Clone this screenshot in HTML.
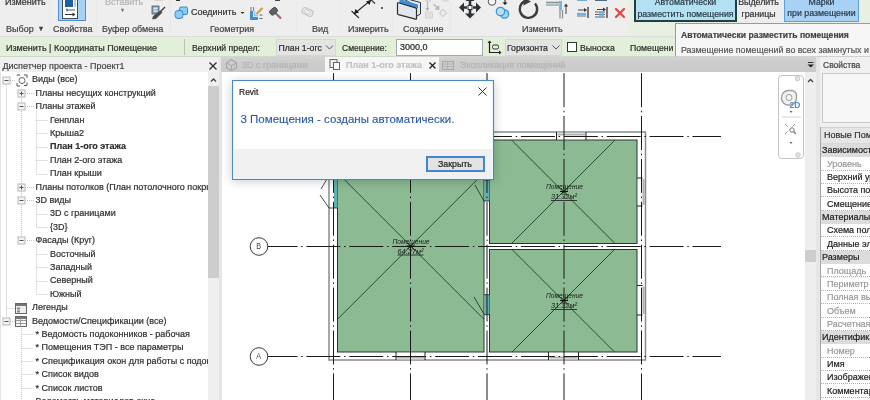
<!DOCTYPE html><html><head><meta charset="utf-8"><style>
html,body{margin:0;padding:0;width:870px;height:400px;overflow:hidden;background:#fff;}
body{position:relative;font-family:"Liberation Sans",sans-serif;filter:blur(0.3px);}
.t{position:absolute;white-space:nowrap;font-family:"Liberation Sans",sans-serif;-webkit-text-stroke:0.2px currentColor;}
svg{position:absolute;left:0;top:0;}
</style></head><body>
<div style="position:absolute;left:0px;top:0px;width:870px;height:36px;background:#eeeeee;"></div>
<div style="position:absolute;left:622px;top:0;width:248px;height:36px;background:linear-gradient(90deg,#eeeeee 0px,#e8f0e2 10px,#e8f0e2 100%)"></div>
<div style="position:absolute;left:737px;top:0px;width:47px;height:23px;background:#ededed;"></div>
<div style="position:absolute;left:0px;top:36px;width:870px;height:1px;background:#dcdcdc;"></div>
<div style="position:absolute;left:49px;top:2px;width:1px;height:32px;background:#e9e9e9;"></div>
<div style="position:absolute;left:96px;top:2px;width:1px;height:32px;background:#e9e9e9;"></div>
<div style="position:absolute;left:170px;top:2px;width:1px;height:32px;background:#e9e9e9;"></div>
<div style="position:absolute;left:296px;top:2px;width:1px;height:32px;background:#e9e9e9;"></div>
<div style="position:absolute;left:340px;top:2px;width:1px;height:32px;background:#e9e9e9;"></div>
<div style="position:absolute;left:392px;top:2px;width:1px;height:32px;background:#e9e9e9;"></div>
<div style="position:absolute;left:450px;top:2px;width:1px;height:32px;background:#e9e9e9;"></div>
<div class="t" style="left:5px;top:-2.02px;font-size:9px;line-height:9px;color:#333;font-weight:normal;">Изменить</div>
<div class="t" style="left:105px;top:-2.02px;font-size:9px;line-height:9px;color:#b4b4b4;font-weight:normal;">Вставить</div>
<div class="t" style="left:121px;top:7.12px;font-size:6px;line-height:6px;color:#777;font-weight:normal;">▾</div>
<div style="position:absolute;left:57.5px;top:-2px;width:28.5px;height:23px;background:#a8d1f4;border:1px solid #4f8fcf;box-sizing:border-box;"></div>
<div style="position:absolute;left:62px;top:-2px;width:16px;height:20.5px;background:#ffffff;border:1px solid #3a4a5a;box-sizing:border-box;"></div>
<div style="position:absolute;left:64.5px;top:-1px;width:8.5px;height:7.5px;background:#1f5f9f;"></div>
<div style="position:absolute;left:74px;top:-1px;width:2px;height:8px;background:#c8c8c8;"></div>
<svg width="90" height="25" style="left:0;top:0"><path d="M66 10H75M67 8.5V11.5" stroke="#555" stroke-width="1"/><path d="M65 14.5H73" stroke="#333" stroke-width="1"/><path d="M72.5 12.5L75.5 14.5L72.5 16.5Z" fill="#333"/></svg>
<div class="t" style="left:6px;top:25.18px;font-size:9px;line-height:9px;color:#424242;font-weight:normal;">Выбор</div>
<div class="t" style="left:38.5px;top:25.16px;font-size:8px;line-height:8px;color:#444;font-weight:normal;">▾</div>
<div class="t" style="left:53px;top:25.18px;font-size:9px;line-height:9px;color:#424242;font-weight:normal;">Свойства</div>
<div class="t" style="left:102px;top:25.18px;font-size:9px;line-height:9px;color:#424242;font-weight:normal;">Буфер обмена</div>
<div class="t" style="left:210px;top:25.18px;font-size:9px;line-height:9px;color:#424242;font-weight:normal;">Геометрия</div>
<div class="t" style="left:312px;top:25.18px;font-size:9px;line-height:9px;color:#424242;font-weight:normal;">Вид</div>
<div class="t" style="left:348px;top:25.18px;font-size:9px;line-height:9px;color:#424242;font-weight:normal;">Измерить</div>
<div class="t" style="left:403px;top:25.18px;font-size:9px;line-height:9px;color:#424242;font-weight:normal;">Создание</div>
<div class="t" style="left:522px;top:25.18px;font-size:9px;line-height:9px;color:#424242;font-weight:normal;">Изменить</div>
<div class="t" style="left:191px;top:8.18px;font-size:9px;line-height:9px;color:#333;font-weight:normal;">Соединить</div>
<svg width="250" height="20" style="left:0;top:0"><path d="M240.5 12H244.5L242.5 14Z" fill="#333"/></svg>
<div style="position:absolute;left:381px;top:7px;width:2px;height:2px;background:#333;border-radius:1px;"></div>
<svg width="870" height="37" viewBox="0 0 870 37" style="left:0;top:0"><rect x="152" y="6" width="7" height="8" fill="#8aa0b8" stroke="#4a5a6a" stroke-width="0.8"/><rect x="153.5" y="7.5" width="4" height="2" fill="#dfe8f0"/><rect x="153.5" y="10.5" width="4" height="1.5" fill="#dfe8f0"/><path d="M165 7L160 12" stroke="#333" stroke-width="1.2"/><path d="M160.5 11L162 12.5L156 18.5L152.5 19L153.5 16Z" fill="#4a4a4a" stroke="#333" stroke-width="0.6"/><rect x="179.5" y="7" width="8" height="7.5" rx="1.5" fill="#8ccbf2" stroke="#3a8ad0" stroke-width="1"/><rect x="175" y="10.5" width="8" height="8" rx="3" fill="#8ccbf2" stroke="#3a8ad0" stroke-width="1"/><path d="M251 7V11M253.5 7V11" stroke="#8a8a8a" stroke-width="1.2"/><path d="M251.5 11V18.5H258" stroke="#3b8fd8" stroke-width="3" fill="none"/><path d="M254.5 11V15.5H258" stroke="#8cc4ee" stroke-width="1.5" fill="none"/><path d="M262.5 8L256.5 14" stroke="#d8a048" stroke-width="2.4"/><path d="M259.5 15H262.5M259.5 18.5H262.5" stroke="#555" stroke-width="0.9"/><path d="M281 18.5L274.5 12" stroke="#9a6a72" stroke-width="2.2"/><rect x="269.5" y="8.5" width="8" height="5.5" rx="2" transform="rotate(-40 273.5 11.2)" fill="#5c6268" stroke="#3a3f44" stroke-width="0.8"/><rect x="302" y="9" width="11" height="6" rx="2" transform="rotate(25 307.5 12)" fill="none" stroke="#c0c0c0" stroke-width="1"/><rect x="304" y="10.5" width="7" height="3" rx="1" transform="rotate(25 307.5 12)" fill="none" stroke="#cfcfcf" stroke-width="0.8"/><path d="M354 14L371 0" stroke="#2a2a2a" stroke-width="1.1"/><path d="M351.5 11L359 18" stroke="#2a2a2a" stroke-width="1.1"/><path d="M368 -3L375 3.5" stroke="#2a2a2a" stroke-width="1.1"/><path d="M354 14L355.5 9L359 12.5Z" fill="#1a1a1a"/><path d="M371 0L366 1.5L369.5 5Z" fill="#1a1a1a"/><path d="M400 -3L420.5 2.5V14L416 16.5V6Z" fill="#dfeaf6" stroke="#333" stroke-width="1" stroke-linejoin="round"/><path d="M399.5 -1L418 4.5V8.5L399.5 3Z" fill="#3d8fd6"/><path d="M397.5 3.5Q397.5 2.5 398.5 2.8L415.5 7.8Q416.5 8.1 416.5 9V18.5Q416.5 19.5 415.5 19.2L398.5 14.7Q397.5 14.4 397.5 13.5Z" fill="#e2e7ee" stroke="#2e2e2e" stroke-width="1.2"/><rect x="425.5" y="-3" width="5" height="4" fill="none" stroke="#cfcfcf"/><path d="M427.5 1V9" stroke="#b8b8b8" stroke-width="1.2"/><path d="M425.5 8H429.5L427.5 11Z" fill="#b0b0b0"/><rect x="425.5" y="12" width="7" height="6" fill="#e2e2e2" stroke="#d2d2d2"/><path d="M433.5 4L438 8.5" stroke="#b8b8b8" stroke-width="1.3"/><path d="M439.5 10L434.5 9.5L439 5Z" fill="#b8b8b8"/><rect x="440.5" y="10.5" width="5" height="5" transform="rotate(45 443 13)" fill="none" stroke="#cfcfcf" stroke-width="1.2"/><rect x="443" y="-3" width="5" height="4" fill="none" stroke="#d0d0d0"/><g fill="#2e3236"><path d="M470 -3.5L474.5 1H465.5Z"/><path d="M470 18.5L475 13.5H465Z"/><path d="M459 7.5L464 2.5V12.5Z"/><path d="M481 7.5L476 2.5V12.5Z"/></g><path d="M470 0V5M470 10V14M463 7.5H467M473 7.5H477" stroke="#2e3236" stroke-width="2.6"/><rect x="468" y="5.5" width="4" height="4" fill="#fff" stroke="#2e3236" stroke-width="1"/><circle cx="492" cy="1.5" r="3.8" fill="#f4f4f4" stroke="#555" stroke-width="1"/><path d="M505 -2V3" stroke="#111" stroke-width="1"/><path d="M502.5 2.5H507.5L505 5Z" fill="#111"/><circle cx="504.5" cy="14" r="4.2" fill="#9fd6f6" stroke="#3d95d8" stroke-width="1.3"/><circle cx="500.5" cy="11.5" r="4.2" fill="#b7e0f8" stroke="#3d95d8" stroke-width="1.3"/><path d="M535 3.5A8.7 8.7 0 1 1 525 1.2" fill="none" stroke="#3a3d40" stroke-width="2.4"/><path d="M523.5 -2.5L531 1.5L523.5 5.5Z" fill="#3a3d40"/><path d="M546 2.5H561M546 5H561" stroke="#8c8c8c" stroke-width="1.6"/><path d="M560.5 1V10" stroke="#6fb8ee" stroke-width="3"/><path d="M560 10V18.5M562.5 10V18.5" stroke="#8c8c8c" stroke-width="1.2"/><path d="M566 5V14" stroke="#333" stroke-width="0.9"/><path d="M564 6.5L566 3.5L568 6.5Z" fill="#333"/><rect x="546" y="3" width="14" height="3" fill="#a8d4f2" opacity="0.5"/><path d="M588 7V18" stroke="#333" stroke-width="1.3"/><path d="M578 10H585" stroke="#333" stroke-width="0.9"/><path d="M584 8L587 10L584 12Z" fill="#333"/><path d="M577 14H586" stroke="#6fb0e8" stroke-width="2.2"/><path d="M577 16H586" stroke="#555" stroke-width="0.8"/><path d="M607 7V18" stroke="#333" stroke-width="1.3"/><path d="M597 9.5H604" stroke="#333" stroke-width="0.9"/><path d="M603 7.5L606 9.5L603 11.5Z" fill="#333"/><path d="M595 12H605M595 14.5H605M595 17H605" stroke="#555" stroke-width="0.9"/><rect x="599" y="11.5" width="5" height="6" fill="#6fb0e8" opacity="0.8"/><path d="M616 9L624 17M624 9L616 17" stroke="#e24a4a" stroke-width="2.3" stroke-linecap="round"/><rect x="577" y="-2" width="10" height="3" fill="#6fb0e8"/><rect x="595" y="-2" width="12" height="3" fill="#4a6a8a"/><rect x="176" y="-2" width="4" height="3" fill="#333"/><rect x="275" y="-2" width="5" height="3" fill="#444"/><rect x="154" y="-2" width="9" height="2.5" fill="#bbb"/></svg>
<div style="position:absolute;left:634px;top:-2px;width:103px;height:23.5px;background:#b3e1f4;border:2px solid #1f3f44;box-sizing:border-box;"></div>
<div class="t" style="left:634px;top:-3px;width:103px;text-align:center;font-size:8.8px;line-height:11.6px;color:#2a3a44">Автоматически<br>разместить помещения</div>
<div class="t" style="left:737px;top:-3px;width:43px;text-align:center;font-size:8.8px;line-height:11.6px;color:#333">Выделить<br>границы</div>
<div style="position:absolute;left:784px;top:-2px;width:75px;height:23.5px;background:#a9d1f3;border:1px solid #5f9fd8;box-sizing:border-box;"></div>
<div class="t" style="left:784px;top:-3.5px;width:75px;text-align:center;font-size:8.8px;line-height:11.6px;color:#2a3a4a">Марки<br>при размещении</div>
<div style="position:absolute;left:0px;top:37px;width:870px;height:20px;background:#e2efd9;"></div>
<div style="position:absolute;left:0px;top:56px;width:870px;height:1px;background:#d0d8cc;"></div>
<div class="t" style="left:6px;top:43.68px;font-size:9px;line-height:9px;color:#2b2b2b;font-weight:normal;">Изменить | Координаты Помещение</div>
<div style="position:absolute;left:184px;top:39px;width:1px;height:16px;background:#b8c4b0;"></div>
<div class="t" style="left:192px;top:43.82px;font-size:8.7px;line-height:8.7px;color:#2b2b2b;font-weight:normal;">Верхний предел:</div>
<div style="position:absolute;left:275.5px;top:39px;width:60.5px;height:17px;background:#e4e4e4;border:1px solid #d6d6d6;box-sizing:border-box;"></div>
<div class="t" style="left:278.5px;top:43.82px;font-size:8.7px;line-height:8.7px;color:#2b2b2b;font-weight:normal;">План 1-огс</div>
<div class="t" style="left:342px;top:43.92px;font-size:8.5px;line-height:8.5px;color:#2b2b2b;font-weight:normal;">Смещение:</div>
<div style="position:absolute;left:395.5px;top:38.5px;width:87.5px;height:17.0px;background:#ffffff;border:1px solid #a8a8a8;box-sizing:border-box;"></div>
<div class="t" style="left:400px;top:43.18px;font-size:9px;line-height:9px;color:#222;font-weight:normal;">3000,0</div>
<div style="position:absolute;left:504.5px;top:39px;width:57.5px;height:17px;background:#e4e4e4;border:1px solid #d6d6d6;box-sizing:border-box;"></div>
<div class="t" style="left:507px;top:43.82px;font-size:8.7px;line-height:8.7px;color:#2b2b2b;font-weight:normal;">Горизонта</div>
<div style="position:absolute;left:567px;top:42px;width:10px;height:10px;background:#ffffff;border:1px solid #333;box-sizing:border-box;"></div>
<div class="t" style="left:580px;top:43.82px;font-size:8.7px;line-height:8.7px;color:#2b2b2b;font-weight:normal;">Выноска</div>
<div class="t" style="left:630px;top:43.82px;font-size:8.7px;line-height:8.7px;color:#2b2b2b;font-weight:normal;">Помещени</div>
<div style="position:absolute;left:675px;top:23px;width:197px;height:34px;background:#f6f6f7;border:1px solid #9a9a9a;border-bottom-color:#d0d0d0;box-sizing:border-box;"></div>
<div class="t" style="left:681px;top:30.87px;font-size:8.6px;line-height:8.6px;color:#444;font-weight:bold;">Автоматически разместить помещения</div>
<div class="t" style="left:681px;top:45.75px;font-size:8.85px;line-height:8.85px;color:#555;font-weight:normal;">Размещение помещений во всех замкнутых и</div>
<div style="position:absolute;left:0px;top:57px;width:222px;height:343px;background:#f0f0f0;"></div>
<div style="position:absolute;left:0px;top:72px;width:208px;height:328px;background:#ffffff;"></div>
<div style="position:absolute;left:0px;top:72px;width:1px;height:328px;background:#e4e4e4;"></div>
<div class="t" style="left:2.5px;top:61.68px;font-size:9px;line-height:9px;color:#444;font-weight:normal;">Диспетчер проекта - Проект1</div>
<div style="position:absolute;left:208px;top:72px;width:11px;height:328px;background:#efefef;"></div>
<div style="position:absolute;left:208px;top:85.5px;width:11px;height:192.5px;background:#cdcdcd;"></div>
<div style="position:absolute;left:219px;top:57px;width:3px;height:343px;background:#e6e6e6;"></div>
<div style="position:absolute;left:221px;top:57px;width:597px;height:15px;background:#cbcbcb;background:linear-gradient(180deg,#d3d3d3 0px,#cdcdcd 5px,#cacaca 15px);"></div>
<div style="position:absolute;left:325px;top:57px;width:113.5px;height:15px;background:#f6f6f6;"></div>
<div class="t" style="left:242px;top:61.18px;font-size:9px;line-height:9px;color:#b3b3b3;font-weight:normal;">3D с границами</div>
<div class="t" style="left:346px;top:61.18px;font-size:9px;line-height:9px;color:#c2c2c2;font-weight:bold;">План 1-ого этажа</div>
<div class="t" style="left:460px;top:61.18px;font-size:9px;line-height:9px;color:#b3b3b3;font-weight:normal;">Экспликация помещений</div>
<div style="position:absolute;left:222px;top:72px;width:594px;height:328px;background:#ffffff;"></div>
<div style="position:absolute;left:805px;top:72px;width:11px;height:328px;background:#eeeeee;"></div>
<div style="position:absolute;left:805px;top:250px;width:11px;height:12px;background:#cdcdcd;"></div>
<div style="position:absolute;left:816px;top:57px;width:4px;height:343px;background:#e6e6e6;"></div>
<div style="position:absolute;left:778px;top:74.5px;width:26px;height:84.5px;background:#ffffff;border:1px solid #c4c4c4;border-radius:4px;box-sizing:border-box;"></div>
<div style="position:absolute;left:820px;top:57px;width:50px;height:343px;background:#f0f0f0;"></div>
<div class="t" style="left:823px;top:60.92px;font-size:8.5px;line-height:8.5px;color:#444;font-weight:normal;">Свойства</div>
<div style="position:absolute;left:822px;top:73px;width:50px;height:50px;background:#f7f7f7;border:1px solid #c8c8c8;box-sizing:border-box;"></div>
<div style="position:absolute;left:820px;top:127px;width:50px;height:16.5px;background:#e6e6e6;border-top:1px solid #d0d0d0;border-bottom:1px solid #d8d8d8;box-sizing:border-box;"></div>
<div class="t" style="left:824px;top:130.68px;font-size:9px;line-height:9px;color:#333;font-weight:normal;">Новые Помещения</div>
<div style="position:absolute;left:820px;top:144px;width:50px;height:13.349999999999994px;background:#dcdcdc;"></div>
<div class="t" style="left:822px;top:146.36px;font-size:9px;line-height:9px;color:#222;font-weight:normal;">Зависимости</div>
<div style="position:absolute;left:820px;top:157.35px;width:50px;height:13.349999999999994px;background:#ffffff;border-bottom:1px dotted #b0b0b0;box-sizing:border-box;"></div>
<div class="t" style="left:827px;top:159.71px;font-size:9px;line-height:9px;color:#999;font-weight:normal;">Уровень</div>
<div style="position:absolute;left:820px;top:170.7px;width:50px;height:13.349999999999994px;background:#ffffff;border-bottom:1px dotted #b0b0b0;box-sizing:border-box;"></div>
<div class="t" style="left:827px;top:173.06px;font-size:9px;line-height:9px;color:#222;font-weight:normal;">Верхний уровень</div>
<div style="position:absolute;left:820px;top:184.04999999999998px;width:50px;height:13.349999999999994px;background:#ffffff;border-bottom:1px dotted #b0b0b0;box-sizing:border-box;"></div>
<div class="t" style="left:827px;top:186.41px;font-size:9px;line-height:9px;color:#222;font-weight:normal;">Высота помещения</div>
<div style="position:absolute;left:820px;top:197.39999999999998px;width:50px;height:13.349999999999994px;background:#ffffff;border-bottom:1px dotted #b0b0b0;box-sizing:border-box;"></div>
<div class="t" style="left:827px;top:199.75px;font-size:9px;line-height:9px;color:#222;font-weight:normal;">Смещение</div>
<div style="position:absolute;left:820px;top:210.74999999999997px;width:50px;height:13.349999999999994px;background:#dcdcdc;"></div>
<div class="t" style="left:822px;top:213.10px;font-size:9px;line-height:9px;color:#222;font-weight:normal;">Материалы</div>
<div style="position:absolute;left:820px;top:224.09999999999997px;width:50px;height:13.349999999999994px;background:#ffffff;border-bottom:1px dotted #b0b0b0;box-sizing:border-box;"></div>
<div class="t" style="left:827px;top:226.45px;font-size:9px;line-height:9px;color:#222;font-weight:normal;">Схема пола</div>
<div style="position:absolute;left:820px;top:237.44999999999996px;width:50px;height:13.349999999999994px;background:#ffffff;border-bottom:1px dotted #b0b0b0;box-sizing:border-box;"></div>
<div class="t" style="left:827px;top:239.80px;font-size:9px;line-height:9px;color:#222;font-weight:normal;">Данные элемента</div>
<div style="position:absolute;left:820px;top:250.79999999999995px;width:50px;height:13.350000000000023px;background:#dcdcdc;"></div>
<div class="t" style="left:822px;top:253.15px;font-size:9px;line-height:9px;color:#222;font-weight:normal;">Размеры</div>
<div style="position:absolute;left:820px;top:264.15px;width:50px;height:13.350000000000023px;background:#ffffff;border-bottom:1px dotted #b0b0b0;box-sizing:border-box;"></div>
<div class="t" style="left:827px;top:266.50px;font-size:9px;line-height:9px;color:#999;font-weight:normal;">Площадь</div>
<div style="position:absolute;left:820px;top:277.5px;width:50px;height:13.350000000000023px;background:#ffffff;border-bottom:1px dotted #b0b0b0;box-sizing:border-box;"></div>
<div class="t" style="left:827px;top:279.86px;font-size:9px;line-height:9px;color:#999;font-weight:normal;">Периметр</div>
<div style="position:absolute;left:820px;top:290.85px;width:50px;height:13.350000000000023px;background:#ffffff;border-bottom:1px dotted #b0b0b0;box-sizing:border-box;"></div>
<div class="t" style="left:827px;top:293.21px;font-size:9px;line-height:9px;color:#999;font-weight:normal;">Полная высота</div>
<div style="position:absolute;left:820px;top:304.20000000000005px;width:50px;height:13.350000000000023px;background:#ffffff;border-bottom:1px dotted #b0b0b0;box-sizing:border-box;"></div>
<div class="t" style="left:827px;top:306.56px;font-size:9px;line-height:9px;color:#999;font-weight:normal;">Объем</div>
<div style="position:absolute;left:820px;top:317.55000000000007px;width:50px;height:13.350000000000023px;background:#ffffff;border-bottom:1px dotted #b0b0b0;box-sizing:border-box;"></div>
<div class="t" style="left:827px;top:319.91px;font-size:9px;line-height:9px;color:#999;font-weight:normal;">Расчетная</div>
<div style="position:absolute;left:820px;top:330.9000000000001px;width:50px;height:13.350000000000023px;background:#dcdcdc;"></div>
<div class="t" style="left:822px;top:333.26px;font-size:9px;line-height:9px;color:#222;font-weight:normal;">Идентификация</div>
<div style="position:absolute;left:820px;top:344.2500000000001px;width:50px;height:13.350000000000023px;background:#ffffff;border-bottom:1px dotted #b0b0b0;box-sizing:border-box;"></div>
<div class="t" style="left:827px;top:346.61px;font-size:9px;line-height:9px;color:#999;font-weight:normal;">Номер</div>
<div style="position:absolute;left:820px;top:357.60000000000014px;width:50px;height:13.350000000000023px;background:#ffffff;border-bottom:1px dotted #b0b0b0;box-sizing:border-box;"></div>
<div class="t" style="left:827px;top:359.96px;font-size:9px;line-height:9px;color:#222;font-weight:normal;">Имя</div>
<div style="position:absolute;left:820px;top:370.95000000000016px;width:50px;height:13.350000000000023px;background:#ffffff;border-bottom:1px dotted #b0b0b0;box-sizing:border-box;"></div>
<div class="t" style="left:827px;top:373.31px;font-size:9px;line-height:9px;color:#222;font-weight:normal;">Изображение</div>
<div style="position:absolute;left:820px;top:384.3000000000002px;width:50px;height:13.350000000000023px;background:#ffffff;border-bottom:1px dotted #b0b0b0;box-sizing:border-box;"></div>
<div class="t" style="left:827px;top:386.66px;font-size:9px;line-height:9px;color:#222;font-weight:normal;">Комментарий</div>
<div style="position:absolute;left:820px;top:397.6500000000002px;width:50px;height:13.350000000000023px;background:#ffffff;border-bottom:1px dotted #b0b0b0;box-sizing:border-box;"></div>
<div class="t" style="left:827px;top:400.01px;font-size:9px;line-height:9px;color:#222;font-weight:normal;">x</div>
<div style="position:absolute;left:820px;top:127px;width:1px;height:273px;background:#a8a8a8;"></div>
<div style="position:absolute;left:0;top:72px;width:208px;height:328px;overflow:hidden;">
<svg width="208" height="328" viewBox="0 72 208 328" style="left:0;top:0"><line x1="6.5" y1="83.7" x2="6.5" y2="320.90000000000003" stroke="#c4c4c4" stroke-width="1" stroke-dasharray="1 1"/><line x1="21.5" y1="97.10000000000001" x2="21.5" y2="240.5" stroke="#c4c4c4" stroke-width="1" stroke-dasharray="1 1"/><line x1="36.5" y1="110.5" x2="36.5" y2="173.5" stroke="#c4c4c4" stroke-width="1" stroke-dasharray="1 1"/><line x1="36.5" y1="204.3" x2="36.5" y2="227.10000000000002" stroke="#c4c4c4" stroke-width="1" stroke-dasharray="1 1"/><line x1="36.5" y1="244.5" x2="36.5" y2="294.1" stroke="#c4c4c4" stroke-width="1" stroke-dasharray="1 1"/><line x1="21.5" y1="325.90000000000003" x2="21.5" y2="400" stroke="#c4c4c4" stroke-width="1" stroke-dasharray="1 1"/><line x1="10" y1="80.5" x2="16" y2="80.5" stroke="#c4c4c4" stroke-width="1" stroke-dasharray="1 1"/><rect x="3.0" y="77.0" width="7" height="7" fill="#f4f4f4" stroke="#b8b8b8"/><line x1="4.5" y1="80.5" x2="8.5" y2="80.5" stroke="#555"/><path d="M17 75.5v-0.5h3M24 75.0h3v3M27 82.5v3h-3M20 86.0h-3v-3" stroke="#555" fill="none"/><circle cx="22" cy="80.5" r="3" stroke="#666" fill="none"/><line x1="25" y1="93.5" x2="34" y2="93.5" stroke="#c4c4c4" stroke-width="1" stroke-dasharray="1 1"/><rect x="18.0" y="90.0" width="7" height="7" fill="#f4f4f4" stroke="#b8b8b8"/><line x1="19.5" y1="93.5" x2="23.5" y2="93.5" stroke="#555"/><line x1="21.5" y1="91.5" x2="21.5" y2="95.5" stroke="#555"/><line x1="25" y1="106.5" x2="34" y2="106.5" stroke="#c4c4c4" stroke-width="1" stroke-dasharray="1 1"/><rect x="18.0" y="103.0" width="7" height="7" fill="#f4f4f4" stroke="#b8b8b8"/><line x1="19.5" y1="106.5" x2="23.5" y2="106.5" stroke="#555"/><line x1="36.5" y1="120.5" x2="48" y2="120.5" stroke="#c4c4c4" stroke-width="1" stroke-dasharray="1 1"/><line x1="36.5" y1="133.5" x2="48" y2="133.5" stroke="#c4c4c4" stroke-width="1" stroke-dasharray="1 1"/><line x1="36.5" y1="147.5" x2="48" y2="147.5" stroke="#c4c4c4" stroke-width="1" stroke-dasharray="1 1"/><line x1="36.5" y1="160.5" x2="48" y2="160.5" stroke="#c4c4c4" stroke-width="1" stroke-dasharray="1 1"/><line x1="36.5" y1="174.5" x2="48" y2="174.5" stroke="#c4c4c4" stroke-width="1" stroke-dasharray="1 1"/><line x1="25" y1="187.5" x2="34" y2="187.5" stroke="#c4c4c4" stroke-width="1" stroke-dasharray="1 1"/><rect x="18.0" y="184.0" width="7" height="7" fill="#f4f4f4" stroke="#b8b8b8"/><line x1="19.5" y1="187.5" x2="23.5" y2="187.5" stroke="#555"/><line x1="21.5" y1="185.5" x2="21.5" y2="189.5" stroke="#555"/><line x1="25" y1="200.5" x2="34" y2="200.5" stroke="#c4c4c4" stroke-width="1" stroke-dasharray="1 1"/><rect x="18.0" y="197.0" width="7" height="7" fill="#f4f4f4" stroke="#b8b8b8"/><line x1="19.5" y1="200.5" x2="23.5" y2="200.5" stroke="#555"/><line x1="36.5" y1="214.5" x2="48" y2="214.5" stroke="#c4c4c4" stroke-width="1" stroke-dasharray="1 1"/><line x1="36.5" y1="227.5" x2="48" y2="227.5" stroke="#c4c4c4" stroke-width="1" stroke-dasharray="1 1"/><line x1="25" y1="240.5" x2="34" y2="240.5" stroke="#c4c4c4" stroke-width="1" stroke-dasharray="1 1"/><rect x="18.0" y="237.0" width="7" height="7" fill="#f4f4f4" stroke="#b8b8b8"/><line x1="19.5" y1="240.5" x2="23.5" y2="240.5" stroke="#555"/><line x1="36.5" y1="254.5" x2="48" y2="254.5" stroke="#c4c4c4" stroke-width="1" stroke-dasharray="1 1"/><line x1="36.5" y1="267.5" x2="48" y2="267.5" stroke="#c4c4c4" stroke-width="1" stroke-dasharray="1 1"/><line x1="36.5" y1="281.5" x2="48" y2="281.5" stroke="#c4c4c4" stroke-width="1" stroke-dasharray="1 1"/><line x1="36.5" y1="294.5" x2="48" y2="294.5" stroke="#c4c4c4" stroke-width="1" stroke-dasharray="1 1"/><line x1="6.5" y1="308.5" x2="15" y2="308.5" stroke="#c4c4c4" stroke-width="1" stroke-dasharray="1 1"/><rect x="15.5" y="303.5" width="11" height="10" fill="#eee" stroke="#666"/><rect x="16" y="304.0" width="10" height="2" fill="#777"/><rect x="17" y="307.5" width="3" height="2" fill="#888"/><rect x="17" y="310.5" width="3" height="2" fill="#888"/><line x1="10" y1="321.5" x2="16" y2="321.5" stroke="#c4c4c4" stroke-width="1" stroke-dasharray="1 1"/><rect x="3.0" y="318.0" width="7" height="7" fill="#f4f4f4" stroke="#b8b8b8"/><line x1="4.5" y1="321.5" x2="8.5" y2="321.5" stroke="#555"/><rect x="15.5" y="316.5" width="11" height="10" fill="#f4f4f4" stroke="#666"/><rect x="16" y="317.0" width="10" height="2" fill="#777"/><line x1="16" y1="320.5" x2="26" y2="320.5" stroke="#999"/><line x1="16" y1="323.5" x2="26" y2="323.5" stroke="#999"/><line x1="20.5" y1="318.5" x2="20.5" y2="326.5" stroke="#999"/><line x1="21.5" y1="334.5" x2="33" y2="334.5" stroke="#c4c4c4" stroke-width="1" stroke-dasharray="1 1"/><line x1="21.5" y1="348.5" x2="33" y2="348.5" stroke="#c4c4c4" stroke-width="1" stroke-dasharray="1 1"/><line x1="21.5" y1="361.5" x2="33" y2="361.5" stroke="#c4c4c4" stroke-width="1" stroke-dasharray="1 1"/><line x1="21.5" y1="374.5" x2="33" y2="374.5" stroke="#c4c4c4" stroke-width="1" stroke-dasharray="1 1"/><line x1="21.5" y1="388.5" x2="33" y2="388.5" stroke="#c4c4c4" stroke-width="1" stroke-dasharray="1 1"/><line x1="21.5" y1="401.5" x2="33" y2="401.5" stroke="#c4c4c4" stroke-width="1" stroke-dasharray="1 1"/></svg>
<div class="t" style="left:32px;top:3.38px;font-size:9px;line-height:9px;color:#2e2e2e;font-weight:normal">Виды (все)</div>
<div class="t" style="left:35.5px;top:16.78px;font-size:9px;line-height:9px;color:#2e2e2e;font-weight:normal">Планы несущих конструкций</div>
<div class="t" style="left:35.5px;top:30.18px;font-size:9px;line-height:9px;color:#2e2e2e;font-weight:normal">Планы этажей</div>
<div class="t" style="left:50px;top:43.58px;font-size:9px;line-height:9px;color:#2e2e2e;font-weight:normal">Генплан</div>
<div class="t" style="left:50px;top:56.98px;font-size:9px;line-height:9px;color:#2e2e2e;font-weight:normal">Крыша2</div>
<div class="t" style="left:50px;top:70.38px;font-size:9px;line-height:9px;color:#2e2e2e;font-weight:bold">План 1-ого этажа</div>
<div class="t" style="left:50px;top:83.78px;font-size:9px;line-height:9px;color:#2e2e2e;font-weight:normal">План 2-ого этажа</div>
<div class="t" style="left:50px;top:97.18px;font-size:9px;line-height:9px;color:#2e2e2e;font-weight:normal">План крыши</div>
<div class="t" style="left:35.5px;top:110.58px;font-size:9px;line-height:9px;color:#2e2e2e;font-weight:normal">Планы потолков (План потолочного покрытия)</div>
<div class="t" style="left:35.5px;top:123.98px;font-size:9px;line-height:9px;color:#2e2e2e;font-weight:normal">3D виды</div>
<div class="t" style="left:50px;top:137.38px;font-size:9px;line-height:9px;color:#2e2e2e;font-weight:normal">3D с границами</div>
<div class="t" style="left:50px;top:150.78px;font-size:9px;line-height:9px;color:#2e2e2e;font-weight:normal">{3D}</div>
<div class="t" style="left:35.5px;top:164.18px;font-size:9px;line-height:9px;color:#2e2e2e;font-weight:normal">Фасады (Круг)</div>
<div class="t" style="left:50px;top:177.58px;font-size:9px;line-height:9px;color:#2e2e2e;font-weight:normal">Восточный</div>
<div class="t" style="left:50px;top:190.98px;font-size:9px;line-height:9px;color:#2e2e2e;font-weight:normal">Западный</div>
<div class="t" style="left:50px;top:204.38px;font-size:9px;line-height:9px;color:#2e2e2e;font-weight:normal">Северный</div>
<div class="t" style="left:50px;top:217.78px;font-size:9px;line-height:9px;color:#2e2e2e;font-weight:normal">Южный</div>
<div class="t" style="left:32px;top:231.18px;font-size:9px;line-height:9px;color:#2e2e2e;font-weight:normal">Легенды</div>
<div class="t" style="left:32px;top:244.58px;font-size:9px;line-height:9px;color:#2e2e2e;font-weight:normal">Ведомости/Спецификации (все)</div>
<div class="t" style="left:35.5px;top:257.98px;font-size:9px;line-height:9px;color:#2e2e2e;font-weight:normal">* Ведомость подоконников - рабочая</div>
<div class="t" style="left:35.5px;top:271.38px;font-size:9px;line-height:9px;color:#2e2e2e;font-weight:normal">* Помещения ТЭП - все параметры</div>
<div class="t" style="left:35.5px;top:284.78px;font-size:9px;line-height:9px;color:#2e2e2e;font-weight:normal">* Спецификация окон для работы с подоконниками</div>
<div class="t" style="left:35.5px;top:298.18px;font-size:9px;line-height:9px;color:#2e2e2e;font-weight:normal">* Список видов</div>
<div class="t" style="left:35.5px;top:311.58px;font-size:9px;line-height:9px;color:#2e2e2e;font-weight:normal">* Список листов</div>
<div class="t" style="left:35.5px;top:324.98px;font-size:9px;line-height:9px;color:#2e2e2e;font-weight:normal">Ведомость материалов окна</div>
</div>
<div style="position:absolute;left:208px;top:72px;width:11px;height:328px;background:#efefef;"></div>
<div style="position:absolute;left:208px;top:85.5px;width:11px;height:192.5px;background:#cdcdcd;"></div>
<div style="position:absolute;left:222px;top:72px;width:583px;height:328px;overflow:hidden;">
<svg width="583" height="328" viewBox="222 72 583 328" style="left:0;top:0"><rect x="329" y="132" width="316.5" height="228" fill="#ffffff" stroke="#8a8a8a" stroke-width="1.5"/><rect x="337.5" y="140" width="146.5" height="212" fill="#8cba92" stroke="#26382a" stroke-width="1"/><rect x="489.5" y="140" width="147.5" height="103.5" fill="#8cba92" stroke="#26382a" stroke-width="1"/><rect x="489.5" y="249.5" width="147.5" height="102.5" fill="#8cba92" stroke="#26382a" stroke-width="1"/><line x1="410.75" y1="246.0" x2="337.5" y2="172.75" stroke="#27502e" stroke-width="1"/><line x1="410.75" y1="246.0" x2="337.5" y2="319.25" stroke="#27502e" stroke-width="1"/><line x1="410.75" y1="246.0" x2="484.0" y2="172.75" stroke="#27502e" stroke-width="1"/><line x1="410.75" y1="246.0" x2="484.0" y2="319.25" stroke="#27502e" stroke-width="1"/><line x1="563.25" y1="191.75" x2="511.5" y2="140.0" stroke="#27502e" stroke-width="1"/><line x1="563.25" y1="191.75" x2="511.5" y2="243.5" stroke="#27502e" stroke-width="1"/><line x1="563.25" y1="191.75" x2="615.0" y2="140.0" stroke="#27502e" stroke-width="1"/><line x1="563.25" y1="191.75" x2="615.0" y2="243.5" stroke="#27502e" stroke-width="1"/><line x1="563.25" y1="300.75" x2="512.0" y2="249.5" stroke="#27502e" stroke-width="1"/><line x1="563.25" y1="300.75" x2="512.0" y2="352.0" stroke="#27502e" stroke-width="1"/><line x1="563.25" y1="300.75" x2="614.5" y2="249.5" stroke="#27502e" stroke-width="1"/><line x1="563.25" y1="300.75" x2="614.5" y2="352.0" stroke="#27502e" stroke-width="1"/><rect x="556.5" y="132.8" width="29.5" height="6.4" fill="#ffffff"/><rect x="557.5" y="133.5" width="27.5" height="2" fill="#b0b0b0"/><path d="M556.5 140V132M586 140V132" stroke="#222" stroke-width="1"/><rect x="396" y="352.8" width="29" height="6.4" fill="#ffffff"/><rect x="397" y="356.5" width="27" height="2" fill="#b0b0b0"/><path d="M396 352V360M425 352V360" stroke="#222" stroke-width="1"/><rect x="548.5" y="352.8" width="30.0" height="6.4" fill="#ffffff"/><rect x="549.5" y="356.5" width="28.0" height="2" fill="#b0b0b0"/><path d="M548.5 352V360M578.5 352V360" stroke="#222" stroke-width="1"/><rect x="637.8" y="178" width="6.9" height="28" fill="#ffffff"/><rect x="642.5" y="179" width="2.2" height="26" fill="#b0b0b0"/><path d="M637 178H642.5M637 206H642.5" stroke="#222" stroke-width="1"/><rect x="637.8" y="285.5" width="6.9" height="29.5" fill="#ffffff"/><rect x="642.5" y="286.5" width="2.2" height="27.5" fill="#b0b0b0"/><path d="M637 285.5H642.5M637 315H642.5" stroke="#222" stroke-width="1"/><rect x="334" y="179" width="3.5" height="29" fill="#5fb0ae"/><rect x="484.5" y="180" width="5.0" height="21" fill="#5fb0ae"/><rect x="484.5" y="294.7" width="5.0" height="20.0" fill="#5fb0ae"/><path d="M327 179L321 189M320 195L329 208H337" stroke="#222" fill="none" stroke-width="0.8"/><path d="M475 185L484 201M474 297L484 314M484 201H490M484 294.7H490M484 314.7H490M484 180H490" stroke="#222" fill="none" stroke-width="0.8"/><line x1="333.5" y1="73.1" x2="333.5" y2="400" stroke="#1a1a1a" stroke-width="1" stroke-dasharray="34 3.7 1.5 3.7"/><line x1="410.5" y1="73.1" x2="410.5" y2="400" stroke="#1a1a1a" stroke-width="1" stroke-dasharray="34 3.7 1.5 3.7"/><line x1="487" y1="73.1" x2="487" y2="400" stroke="#1a1a1a" stroke-width="1" stroke-dasharray="34 3.7 1.5 3.7"/><line x1="564" y1="73.1" x2="564" y2="400" stroke="#1a1a1a" stroke-width="1" stroke-dasharray="34 3.7 1.5 3.7"/><line x1="641.5" y1="73.1" x2="641.5" y2="400" stroke="#1a1a1a" stroke-width="1" stroke-dasharray="34 3.7 1.5 3.7"/><line x1="263.5" y1="136.5" x2="721" y2="136.5" stroke="#1a1a1a" stroke-width="1" stroke-dasharray="34 3.7 1.5 3.7"/><line x1="263.5" y1="246.5" x2="721" y2="246.5" stroke="#1a1a1a" stroke-width="1" stroke-dasharray="34 3.7 1.5 3.7"/><line x1="263.5" y1="356.5" x2="721" y2="356.5" stroke="#1a1a1a" stroke-width="1" stroke-dasharray="34 3.7 1.5 3.7"/><circle cx="259" cy="246.5" r="8.8" fill="#fff" stroke="#222" stroke-width="0.9"/><text x="258.7" y="249.0" font-family="Liberation Sans" font-size="8.5" text-anchor="middle" fill="#444" textLength="4.8" lengthAdjust="spacingAndGlyphs">B</text><circle cx="259" cy="356.5" r="8.8" fill="#fff" stroke="#222" stroke-width="0.9"/><text x="258.7" y="359.0" font-family="Liberation Sans" font-size="8.5" text-anchor="middle" fill="#444" textLength="4.8" lengthAdjust="spacingAndGlyphs">A</text><text x="411.0" y="243.5" font-family="Liberation Sans" font-size="7.5" font-style="italic" text-anchor="middle" fill="#1a1a1a" textLength="37" lengthAdjust="spacingAndGlyphs">Помещение</text><text x="410.5" y="253.5" font-family="Liberation Sans" font-size="7.5" font-style="italic" text-anchor="middle" fill="#1a1a1a" textLength="26" lengthAdjust="spacingAndGlyphs">64.27м²</text><line x1="397.5" y1="255" x2="423.5" y2="255" stroke="#1a1a1a" stroke-width="0.8"/><path d="M407.5 243L413.5 249M413.5 243L407.5 249M406.5 246H414.5" stroke="#111" stroke-width="1"/><text x="564.5" y="189.0" font-family="Liberation Sans" font-size="7.5" font-style="italic" text-anchor="middle" fill="#1a1a1a" textLength="37" lengthAdjust="spacingAndGlyphs">Помещение</text><text x="564" y="199.0" font-family="Liberation Sans" font-size="7.5" font-style="italic" text-anchor="middle" fill="#1a1a1a" textLength="26" lengthAdjust="spacingAndGlyphs">31.32м²</text><line x1="551" y1="200.5" x2="577" y2="200.5" stroke="#1a1a1a" stroke-width="0.8"/><path d="M561 188.5L567 194.5M567 188.5L561 194.5M560 191.5H568" stroke="#111" stroke-width="1"/><text x="564.5" y="298.0" font-family="Liberation Sans" font-size="7.5" font-style="italic" text-anchor="middle" fill="#1a1a1a" textLength="37" lengthAdjust="spacingAndGlyphs">Помещение</text><text x="564" y="308.0" font-family="Liberation Sans" font-size="7.5" font-style="italic" text-anchor="middle" fill="#1a1a1a" textLength="26" lengthAdjust="spacingAndGlyphs">31.32м²</text><line x1="551" y1="309.5" x2="577" y2="309.5" stroke="#1a1a1a" stroke-width="0.8"/><path d="M561 297.5L567 303.5M567 297.5L561 303.5M560 300.5H568" stroke="#111" stroke-width="1"/></svg>
</div>
<div style="position:absolute;left:232px;top:80px;width:262px;height:99px;box-shadow:0 2px 10px rgba(0,0,0,0.22);"></div>
<div style="position:absolute;left:232px;top:80px;width:262px;height:99.5px;background:#ffffff;border:1px solid #4f88ba;box-shadow:inset 0 0 0 1px #e6f6ff;box-sizing:border-box;"></div>
<div style="position:absolute;left:234px;top:148.5px;width:258px;height:29.0px;background:#f0f0f0;"></div>
<div class="t" style="left:239px;top:87.92px;font-size:8.5px;line-height:8.5px;color:#222;font-weight:normal;">Revit</div>
<svg width="870" height="400" style="left:0;top:0"><path d="M478.5 87.5L486.5 95.5M486.5 87.5L478.5 95.5" stroke="#333" stroke-width="1"/></svg>
<div class="t" style="left:240.5px;top:113.88px;font-size:11.5px;line-height:11.5px;color:#2656a6;font-weight:normal;-webkit-text-stroke:0.1px currentColor;">3 Помещения - созданы автоматически.</div>
<div style="position:absolute;left:425.5px;top:156px;width:59.0px;height:15.5px;background:#e3e3e3;border:2px solid #4285d6;box-sizing:border-box;"></div>
<div class="t" style="left:438px;top:159.78px;font-size:8.8px;line-height:8.8px;color:#222;font-weight:normal;">Закрыть</div>
<svg width="870" height="400" viewBox="0 0 870 400" style="left:0;top:0;pointer-events:none"><path d="M326.0 45.5L329.5 49L333.0 45.5" stroke="#555" stroke-width="1" fill="none"/><path d="M552.5 45.5L556 49L559.5 45.5" stroke="#555" stroke-width="1" fill="none"/><path d="M489.5 41V52.5H501" stroke="#222" stroke-width="1.2" fill="none"/><path d="M487.5 43L489.5 40.5L491.5 43ZM499 50.5L501.5 52.5L499 54.5Z" fill="#222"/><rect x="492.5" y="45" width="6" height="4" rx="1.5" fill="none" stroke="#333" stroke-width="1"/><path d="M209.5 62.5L216.5 69.5M216.5 62.5L209.5 69.5" stroke="#333" stroke-width="1.4"/><path d="M211 81.5L213.5 79L216 81.5" stroke="#444" stroke-width="1.3" fill="none"/><path d="M808 82L810.5 79.5L813 82" stroke="#444" stroke-width="1.3" fill="none"/><path d="M226.5 63L231.5 59.5L236.5 63V68L231.5 70.5L226.5 68Z" fill="none" stroke="#a8a8a8" stroke-width="1.2"/><path d="M226.5 63L231.5 65.5L236.5 63M231.5 65.5V70.5" stroke="#a8a8a8" stroke-width="1" fill="none"/><rect x="330" y="59.5" width="7" height="8" fill="#f0f0f0" stroke="#666" stroke-width="1"/><rect x="333.5" y="62.5" width="6" height="7" fill="#fafafa" stroke="#666" stroke-width="1"/><path d="M429.5 62.5L435.5 68.5M435.5 62.5L429.5 68.5" stroke="#222" stroke-width="1.3"/><rect x="442.5" y="61.5" width="11" height="8" fill="none" stroke="#a8a8a8" stroke-width="1"/><path d="M442.5 64H453.5M442.5 66.5H453.5M447.5 61.5V69.5" stroke="#b0b0b0" stroke-width="0.8"/><path d="M808 62.5H813.5" stroke="#333" stroke-width="1"/><path d="M807.5 64.5H814L810.75 67.5Z" fill="#222"/><circle cx="797.5" cy="78.5" r="2.3" fill="#e4e4e4" stroke="#bdbdbd" stroke-width="0.8"/><path d="M781.5 97.5A7 7 0 0 1 788.5 90.5H791.5A5 5 0 0 1 796.5 95.5V98A7 7 0 0 1 789.5 105H788.5A7 7 0 0 1 781.5 98Z" fill="#f2f2f2" stroke="#a0a0a0" stroke-width="1.4"/><circle cx="789" cy="97.5" r="3" fill="#fafafa" stroke="#999" stroke-width="1"/><text x="789.5" y="107.5" font-family="Liberation Sans" font-size="8.5" fill="#4a8fd0" font-weight="bold">2D</text><path d="M789.5 111L791 113L792.5 111Z" fill="#666"/><path d="M782 117H801" stroke="#d4d4d4" stroke-width="1"/><path d="M785 124L787.5 126.5M795 124L792.5 126.5M785 134L787.5 131.5" stroke="#888" stroke-width="0.9"/><circle cx="792" cy="130" r="2.2" fill="none" stroke="#777" stroke-width="1"/><path d="M793.5 131.5L796 134" stroke="#777" stroke-width="1.2"/><path d="M789.5 142L791 144L792.5 142Z" fill="#666"/><circle cx="798" cy="155" r="2.3" fill="#e4e4e4" stroke="#bdbdbd" stroke-width="0.8"/></svg>
</body></html>
